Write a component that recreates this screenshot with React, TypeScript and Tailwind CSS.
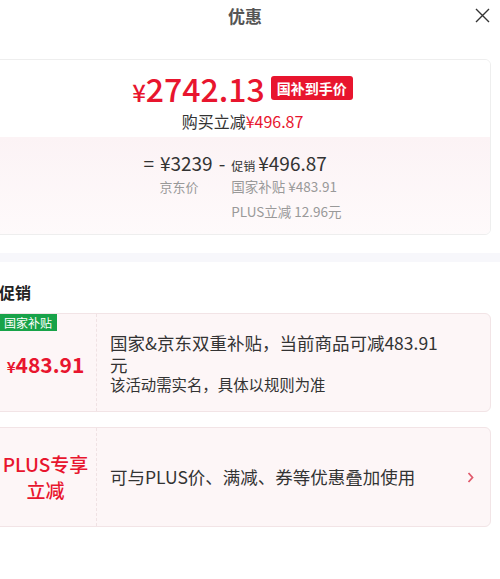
import React from "react";

const font = { fontFamily: "'Noto Sans CJK SC', 'Noto Sans', sans-serif" };

export default function App() {
  return (
    <div className="w-[500px] h-[579px] overflow-hidden bg-white" style={font}>
      <div className="w-[506px] -ml-[6px]">
        {/* header */}
        <div className="relative h-[30px] flex items-center justify-center">
          <span className="text-[17px] font-bold text-[#555] pr-[4px] leading-none">优惠</span>
          <svg
            className="absolute right-[10px] top-[8px]"
            width="15"
            height="15"
            viewBox="0 0 15 15"
            fill="none"
            stroke="#333"
            strokeWidth="1.4"
          >
            <path d="M1 1L14 14M14 1L1 14" />
          </svg>
        </div>

        {/* price card */}
        <div className="mt-[29px] mr-[9px] border border-[#eeeeee] rounded-[6px] overflow-hidden">
          <div className="pt-[10px] pb-[6px] flex flex-col items-center bg-white">
            <div className="h-[36px] flex items-center">
              <span className="text-[#e8152e] font-medium leading-none flex items-baseline">
                <span className="text-[24px]">¥</span>
                <span className="text-[32px]">2742.13</span>
              </span>
              <span className="ml-[6px] h-[24px] px-[6px] rounded-[3px] bg-[#e8152e] text-white text-[14px] font-bold flex items-center leading-none">
                国补到手价
              </span>
            </div>
            <div className="mt-[5px] h-[20px] flex items-center text-[16px] leading-none">
              <span className="text-[#333]">购买立减</span>
              <span className="text-[#e8152e]">¥496.87</span>
            </div>
          </div>
          <div className="pt-[13px] pb-[10px] bg-gradient-to-b from-[#fcf3f5] to-[#fefafb] flex justify-center">
            <div className="flex flex-col">
              <div className="h-[24px] flex items-center text-[19px] text-[#333] leading-none">
                <span>=</span>
                <span className="ml-[6px]">¥3239</span>
              </div>
              <div className="h-[25px] flex items-center pl-[16px] text-[13px] text-[#999] leading-none">
                京东价
              </div>
            </div>
            <div className="h-[24px] flex items-center px-[6px] text-[19px] text-[#333] leading-none">
              -
            </div>
            <div className="flex flex-col">
              <div className="h-[24px] flex items-center text-[#333]">
                <span className="flex items-baseline leading-none">
                  <span className="text-[12px]">促销</span>
                  <span className="ml-[3px] text-[19px]">¥496.87</span>
                </span>
              </div>
              <div className="h-[25px] flex items-center text-[13.5px] text-[#999] leading-none">
                国家补贴 ¥483.91
              </div>
              <div className="h-[25px] flex items-center text-[13.5px] text-[#999] leading-none">
                PLUS立减 12.96元
              </div>
            </div>
          </div>
        </div>

        {/* separator band */}
        <div className="mt-[18px] h-[9px] bg-[#f7f7fb]" />

        {/* promo title */}
        <div className="mt-[19px] h-[22px] flex items-center pl-[5px] text-[16px] font-bold text-[#222] leading-none">
          促销
        </div>

        {/* promo card 1 */}
        <div className="relative mt-[10px] mr-[9px] h-[99px] flex border border-[#f2e4e6] rounded-[6px] bg-[#fdf6f7] overflow-hidden">
          <div className="absolute left-0 top-0 h-[17px] pl-[9px] pr-[5px] bg-[#18a349] text-white text-[12px] leading-none flex items-center">
            国家补贴
          </div>
          <div className="w-[102px] shrink-0 flex items-center justify-center border-r border-dashed border-[#f0e2e4] pt-[4px]">
            <span className="text-[#e8152e] font-semibold leading-none flex items-baseline">
              <span className="text-[15px]">¥</span>
              <span className="text-[21px]">483.91</span>
            </span>
          </div>
          <div className="flex-1 flex flex-col justify-center pl-[13px] text-[#333]">
            <div className="text-[17.5px] leading-[22px]">
              国家&amp;京东双重补贴，当前商品可减483.91
              <br />元
            </div>
            <div className="text-[15.4px] leading-[20px] mt-[-2px]">该活动需实名，具体以规则为准</div>
          </div>
        </div>

        {/* promo card 2 */}
        <div className="mt-[15px] mr-[9px] h-[100px] flex border border-[#f2e4e6] rounded-[6px] bg-[#fdf6f7] overflow-hidden">
          <div className="w-[102px] shrink-0 flex flex-col items-center justify-center border-r border-dashed border-[#f0e2e4] text-[#e8152e] text-[19px] font-medium leading-[26px]">
            <span>PLUS专享</span>
            <span>立减</span>
          </div>
          <div className="flex-1 flex items-center pl-[13px] pr-[16px]">
            <span className="flex-1 text-[17.5px] text-[#333]">可与PLUS价、满减、券等优惠叠加使用</span>
            <svg width="7" height="11" viewBox="0 0 7 11" fill="none" stroke="#e05a6c" strokeWidth="1.8">
              <path d="M1.5 1L5.5 5.5L1.5 10" />
            </svg>
          </div>
        </div>
      </div>
    </div>
  );
}
